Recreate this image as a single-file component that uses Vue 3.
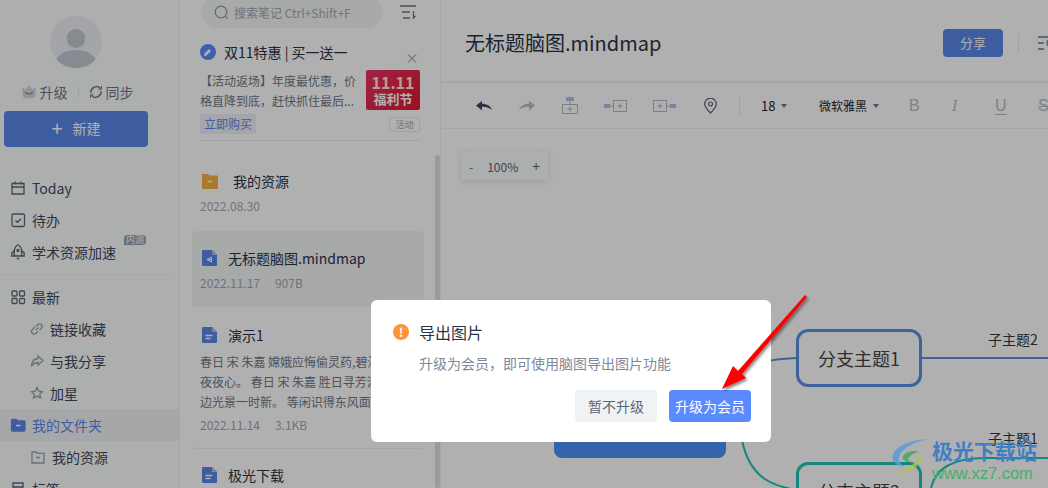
<template>
  <div class="app">
    <aside class="sidebar">
      <div class="avatar">
        <svg width="52" height="52" viewBox="0 0 52 52">
          <circle cx="26" cy="26" r="26" fill="#eef0f3" />
          <circle cx="26" cy="22.500" r="9.500" fill="#c3c8d2" />
          <path d="M6.500 43.500C10 37 17 34 26 34s16 3 19.500 9.500A26 26 0 0 1 26 52a26 26 0 0 1-19.500-8.500z" fill="#c3c8d2" />
        </svg>
      </div>
      <div class="sync-row">
        <svg width="16" height="14" viewBox="0 0 16 14">
          <path d="M1 2l3.500 2.500L8 0l3.500 4.500L15 2l-1 10q-6 3-12 0z" fill="#d4d7dc" />
          <path d="M4 7q4 4 8 0" stroke="#8d94a3" stroke-width="1.500" fill="none" />
        </svg>
        <span>升级</span>
        <i class="sep"></i>
        <svg width="14" height="14" viewBox="0 0 14 14" fill="none" stroke="#767d8c" stroke-width="1.500">
          <path d="M2 8A5.500 5.500 0 0 1 11.500 3.500M12 6a5.500 5.500 0 0 1-9.500 4.500" />
          <path d="M12.500 1v3.200H9.300M1.500 13V9.800h3.200" stroke-width="1" />
        </svg>
        <span>同步</span>
      </div>
      <button class="new-btn"><span class="plus">+</span>新建</button>

      <nav class="nav">
        <div class="nav-item">
          <svg class="ico" viewBox="0 0 16 16"><path d="M2 3.500h12v10.500H2zM2 7h12M5 1.500v3M11 1.500v3" /></svg>
          <span>Today</span>
        </div>
        <div class="nav-item">
          <svg class="ico" viewBox="0 0 16 16"><rect x="2" y="2" width="12.500" height="12.500" rx="1.500" /><path d="M5.500 8.500l2 1.800 3.500-3.500" /></svg>
          <span>待办</span>
        </div>
        <div class="nav-item">
          <svg class="ico" viewBox="0 0 16 16"><path d="M8 .8c2.700 1.500 3.700 4 3.700 6.700v4.500H4.300V7.500C4.300 4.800 5.300 2.300 8 .8zM4.300 6.500L1.800 9v3h2.500M11.700 6.500L14.200 9v3h-2.500M6.800 14.500h2.400" /><circle cx="8" cy="6.500" r="1" /></svg>
          <span>学术资源加速</span>
          <em class="tag">内测</em>
        </div>
        <div class="nav-line"></div>
        <div class="nav-item">
          <svg class="ico" viewBox="0 0 16 16"><rect x="2" y="2" width="5" height="5" rx="1" /><rect x="9.500" y="2" width="5" height="5" rx="1" /><rect x="2" y="9.500" width="5" height="5" rx="1" /><rect x="9.500" y="9.500" width="5" height="5" rx="1" /></svg>
          <span>最新</span>
        </div>
        <div class="nav-item sub">
          <svg class="ico small" viewBox="0 0 14 14"><path d="M6 8l2.500-2.500M5 5L2.500 7.500a2.500 2.500 0 0 0 3.500 4L8 9.500M6 4.500l2-2a2.500 2.500 0 0 1 3.500 3.500L9.500 8" /></svg>
          <span>链接收藏</span>
        </div>
        <div class="nav-item sub">
          <svg class="ico small" viewBox="0 0 14 14"><path d="M8 2l5 4.500L8 11V8.500C5 8.500 3 9.500 1.500 12.500 1.500 8 4 5 8 4.500z" /></svg>
          <span>与我分享</span>
        </div>
        <div class="nav-item sub">
          <svg class="ico small" viewBox="0 0 14 14"><path d="M7 1.500l1.700 3.600 3.800.5-2.800 2.600.8 3.800L7 10.100 3.500 12l.8-3.800L1.500 5.600l3.800-.5z" /></svg>
          <span>加星</span>
        </div>
        <div class="nav-item active">
          <svg class="ico" viewBox="0 0 16 16"><path class="solid" d="M1.500 3.500q0-1 1-1h3.800l1.500 1.500h6.200q1 0 1 1v8q0 1-1 1H2.500q-1 0-1-1z" /><path d="M6 8.500h4.500" stroke="#fff" stroke-width="1.500" /></svg>
          <span>我的文件夹</span>
        </div>
        <div class="nav-item sub res">
          <svg class="ico small" viewBox="0 0 14 14"><path d="M1 2h4l1.200 1.300H13V13H1zM5 7.500h4" /></svg>
          <span>我的资源</span>
        </div>
        <div class="nav-item">
          <svg class="ico" viewBox="0 0 16 16"><path d="M3 2h10v12H3zM3 6h10" /></svg>
          <span>标签</span>
        </div>
      </nav>
    </aside>

    <section class="list">
      <div class="search-row">
        <div class="search">
          <svg width="15" height="15" viewBox="0 0 15 15" fill="none" stroke="#8f97a6" stroke-width="1.200"><circle cx="7" cy="7" r="5.800" /><path d="M11.300 11.300l2.500 2.500" /></svg>
          <span>搜索笔记 Ctrl+Shift+F</span>
        </div>
        <svg class="sort" width="16" height="14" viewBox="0 0 16 14" fill="none" stroke="#6f7787" stroke-width="1.300">
          <path d="M0 1h16M2 7h8M3 13h7M13.500 6v7l2-2" />
        </svg>
      </div>

      <div class="promo">
        <div class="promo-title">
          <svg width="16" height="16" viewBox="0 0 16 16"><circle cx="8" cy="8" r="8" fill="#5b8aff" /><path d="M4.500 9.500l4.500-4.500 2 2-4.500 4.500-2.500.5z" fill="#fff" /></svg>
          <span>双11特惠 | 买一送一</span>
          <b class="close">×</b>
        </div>
        <div class="promo-body">
          <p>【活动返场】年度最优惠，价格直降到底，赶快抓住最后...</p>
          <div class="promo-pic">
            <strong>11.11</strong>
            <span>福利节</span>
          </div>
        </div>
        <div class="promo-foot">
          <span class="buy">立即购买</span>
          <span class="badge">活动</span>
        </div>
      </div>

      <div class="note folder-note">
        <div class="note-title">
          <svg class="doc" width="16" height="16" viewBox="0 0 16 16"><path d="M0 2q0-1 1-1h5l1.500 1.500H15q1 0 1 1V15q0 1-1 1H1q-1 0-1-1z" fill="#f5b041" /><path d="M5.500 8.500h4.500" stroke="#fff" stroke-width="1.500" /></svg>
          <span class="folder-name">我的资源</span>
        </div>
        <div class="note-meta">2022.08.30</div>
      </div>

      <div class="note selected">
        <div class="note-title">
          <svg class="doc" width="15" height="16" viewBox="0 0 15 16"><path d="M1 0h9l5 5v10q0 1-1 1H1q-1 0-1-1V1q0-1 1-1z" fill="#5b87e8" /><path d="M10 0l5 5h-5z" fill="#a9c1f5" /><path d="M5 9.500h5M9.500 7v5M5 9.500L9.500 7M5 9.500L9.500 12" stroke="#fff" stroke-width="1" fill="none" /></svg>
          <span>无标题脑图.mindmap</span>
        </div>
        <div class="note-meta"><span>2022.11.17</span><span>907B</span></div>
      </div>

      <div class="note text-note">
        <div class="note-title">
          <svg class="doc" width="15" height="16" viewBox="0 0 15 16"><path d="M1 0h9l5 5v10q0 1-1 1H1q-1 0-1-1V1q0-1 1-1z" fill="#5b87e8" /><path d="M10 0l5 5h-5z" fill="#a9c1f5" /><path d="M3.500 8.500h7M3.500 11.500h5" stroke="#fff" stroke-width="1.300" /></svg>
          <span>演示1</span>
        </div>
        <p class="excerpt">春日 宋 朱嘉 嫦娥应悔偷灵药,碧海<br>夜夜心。 春日 宋 朱嘉 胜日寻芳泗水<br>边光景一时新。 等闲识得东风面，万紫</p>
        <div class="note-meta"><span>2022.11.14</span><span>3.1KB</span></div>
      </div>

      <div class="note last-note">
        <div class="note-title">
          <svg class="doc" width="15" height="16" viewBox="0 0 15 16"><path d="M1 0h9l5 5v10q0 1-1 1H1q-1 0-1-1V1q0-1 1-1z" fill="#5b87e8" /><path d="M10 0l5 5h-5z" fill="#a9c1f5" /><path d="M3.500 8.500h7M3.500 11.500h5" stroke="#fff" stroke-width="1.300" /></svg>
          <span>极光下载</span>
        </div>
      </div>
      <div class="scrollbar"></div>
    </section>

    <main class="main">
      <header class="head">
        <h1>无标题脑图.mindmap</h1>
        <button class="share">分享</button>
        <i class="head-sep"></i>
        <svg class="outline" width="20" height="14" viewBox="0 0 20 14" fill="none" stroke="#6f7787" stroke-width="1.300"><path d="M0 1h20M0 7h6M0 13h6" /><circle cx="13" cy="7" r="4" /></svg>
      </header>

      <div class="toolbar">
        <svg class="tool" width="16" height="12" viewBox="0 0 16 12"><path d="M6 1v2.800C11 3.800 14.500 6 16 10c-3-2.500-6-3.300-10-3.200V10.500L0 5.500z" fill="#3f4860" /></svg>
        <svg class="tool" width="16" height="12" viewBox="0 0 16 12"><path d="M10 1v2.800C5 3.800 1.500 6 0 10c3-2.500 6-3.300 10-3.200V10.500L16 5.500z" fill="#b6bbc5" /></svg>
        <svg class="tool" width="16" height="18" viewBox="0 0 16 18" fill="none" stroke="#b2b7c1"><rect x="4" y="0" width="8" height="4" fill="#a9c3ee" stroke="none" /><path d="M8 4v3M.5 7.500h15v9H.5zM8 9.500v5M5.500 12h5" /></svg>
        <svg class="tool" width="23" height="12" viewBox="0 0 23 12" fill="none" stroke="#b2b7c1"><rect x="0" y="4" width="6" height="4" fill="#a9c3ee" stroke="none" /><path d="M6 6h3M9.500.5h13v11h-13zM16 3.500v5M13.500 6h5" /></svg>
        <svg class="tool" width="23" height="12" viewBox="0 0 23 12" fill="none" stroke="#b2b7c1"><rect x="17" y="4" width="6" height="4" fill="#a9c3ee" stroke="none" /><path d="M17 6h-3M.5.500h13v11H.5zM7 3.500v5M4.500 6h5" /></svg>
        <svg class="tool" width="13" height="16" viewBox="0 0 13 16" fill="none" stroke="#5c6577" stroke-width="1.200"><path d="M6.500 15C3 11.500.7 9 .7 6a5.800 5.800 0 0 1 11.600 0c0 3-2.300 5.500-5.800 9z" /><circle cx="6.500" cy="6" r="2" /></svg>
        <i class="tool-sep"></i>
        <span class="size">18<u class="caret"></u></span>
        <span class="family">微软雅黑<u class="caret"></u></span>
        <span class="fmt b">B</span>
        <span class="fmt i">I</span>
        <span class="fmt u">U</span>
        <span class="fmt s">S</span>
      </div>

      <div class="canvas">
        <div class="zoom-box"><span>-</span><span>100%</span><span class="zoom-plus">+</span></div>

        <svg class="lines" width="608" height="359" viewBox="440 129 608 359" fill="none">
          <path d="M640 420C700 380 740 360 796 358" stroke="#5a8fe0" stroke-width="2" />
          <path d="M921 358H1048" stroke="#5a8fe0" stroke-width="2" />
          <path d="M742 440C750 480 775 486 796 490" stroke="#1fc4b4" stroke-width="2" />
          <path d="M931 488C935 470 950 458 985 458H1048" stroke="#1fc4b4" stroke-width="2" />
        </svg>
        <div class="root-node"></div>
        <div class="topic blue">分支主题1</div>
        <div class="topic teal">分支主题2</div>
        <span class="leaf leaf-a">子主题2</span>
        <span class="leaf leaf-b">子主题1</span>
      </div>
    </main>

    <div class="mask"></div>

    <div class="dialog">
      <div class="dialog-title">
        <span class="warn">!</span>
        <span>导出图片</span>
      </div>
      <p>升级为会员，即可使用脑图导出图片功能</p>
      <div class="dialog-btns">
        <button class="later">暂不升级</button>
        <button class="upgrade">升级为会员</button>
      </div>
    </div>

    <svg class="arrow" width="1048" height="488" viewBox="0 0 1048 488">
      <defs>
        <filter id="arrowShadow" x="-30%" y="-30%" width="160%" height="160%">
          <feDropShadow dx="1.500" dy="2" stdDeviation="1.500" flood-color="#000" flood-opacity="0.500" />
        </filter>
      </defs>
      <path d="M722 389L733 366L738 371L805 295L807 297L742 374L746 378z" fill="#ff0000" filter="url(#arrowShadow)" />
    </svg>

    <div class="watermark">
      <svg class="wm-logo" width="40" height="40" viewBox="0 0 44 44" fill="none">
        <path d="M42 1C24 2 6 8 3 19c-2 8 6 12 14 13C10 28 7 22 13 15 19 8 32 3 42 1z" fill="#5b9bd5" opacity="0.850" />
        <path d="M32 15c-8-2-17 1-18 6-1 4 5 6 9 5-3-1-4-3-2-5 3-3 7-5 11-6z" fill="#43a86b" opacity="0.850" />
        <path d="M32 15c1 7-5 16-28 27 12-2 30-9 30-21 0-3-1-5-2-6z" fill="#a8c84a" opacity="0.800" />
      </svg>
      <div class="wm-text">
        <strong>极光下载站</strong>
        <span>www.xz7.com</span>
      </div>
    </div>
  </div>
</template>

<script setup>
</script>

<style>
html, body {
  margin: 0;
  overflow: hidden;
  background: #fff;
}
</style>

<style scoped>
.app {
  position: relative;
  display: flex;
  width: 1048px;
  height: 488px;
  overflow: hidden;
  background: #fff;
  color: #2b3245;
  font-family: "Noto Sans CJK SC", "Noto Sans", sans-serif;
  font-size: 14px;
}

button {
  font-family: inherit;
  border: none;
  cursor: pointer;
}

/* left column */
.sidebar {
  flex: none;
  width: 180px;
  height: 488px;
  background: #fbfdfc;
  box-shadow: inset -2px 0 0 #f5f6f6;
  box-sizing: border-box;
  overflow: hidden;
}

.avatar {
  display: flex;
  justify-content: center;
  width: 152px;
  padding-top: 16px;
  height: 52px;
}

.sync-row {
  display: flex;
  align-items: center;
  justify-content: center;
  width: 152px;
  height: 20px;
  margin-top: 14px;
  gap: 3px;
  color: #6f7787;
  font-size: 14px;
  line-height: 20px;
}

.sync-row svg:first-child {
  margin-left: 2px;
}

.sep {
  width: 1px;
  height: 12px;
  margin: 0 7px;
  background: #e4e6ea;
}

.new-btn {
  display: flex;
  align-items: center;
  justify-content: center;
  width: 144px;
  height: 36px;
  margin: 9px 0 0 4px;
  padding: 0 0 2px;
  border-radius: 4px;
  background: #5b87e8;
  color: #fff;
  font-size: 14px;
}

.plus {
  margin-right: 10px;
  font-size: 20px;
  line-height: 20px;
}

.nav {
  margin-top: 25px;
}

.nav-item {
  position: relative;
  display: flex;
  align-items: center;
  height: 32px;
  padding-left: 10px;
  color: #3f4860;
  font-size: 14px;
  white-space: nowrap;
}

.ico {
  flex: none;
  width: 16px;
  height: 16px;
  margin-right: 6px;
  fill: none;
  stroke: #5c6577;
  stroke-width: 1.300;
}

.ico.small {
  width: 14px;
  height: 14px;
  stroke: #9aa1ae;
}

.sub {
  padding-left: 30px;
}

.res {
  padding-left: 31px;
}

.res .ico {
  margin-right: 7px;
}

.active {
  background: #f0f2f3;
  color: #5b87e8;
}

.solid {
  fill: #5b87e8;
  stroke: #5b87e8;
}

.tag {
  position: absolute;
  left: 124px;
  top: -1px;
  width: 22px;
  height: 10px;
  border-radius: 4px 4px 4px 0;
  background: #9aa1ae;
  color: #fff;
  font-size: 9px;
  font-style: normal;
  line-height: 10px;
  text-align: center;
}

.nav-line {
  height: 1px;
  margin: 6px 6px 6px 0;
  background: #f1f2f3;
}

/* note list */
.list {
  position: relative;
  flex: none;
  width: 260px;
  height: 488px;
  overflow: hidden;
}

.search-row {
  display: flex;
  align-items: center;
  height: 32px;
  margin: -4px 0 0 21px;
}

.search {
  display: flex;
  align-items: center;
  gap: 5px;
  width: 182px;
  height: 32px;
  padding-left: 13px;
  box-sizing: border-box;
  border-radius: 16px;
  background: #f3f5f5;
  color: #a1a8b4;
  font-size: 12px;
}

.sort {
  margin-left: 17px;
}

.promo {
  margin: 14px 20px 0;
  padding-bottom: 6px;
  border-bottom: 1px solid #eceef0;
}

.promo-title {
  position: relative;
  display: flex;
  align-items: center;
  gap: 8px;
  height: 20px;
  color: #2b3245;
  font-size: 14px;
}

.close {
  position: absolute;
  right: 1px;
  top: 5px;
  color: #a1a8b4;
  font-size: 14px;
  font-weight: 400;
}

.promo-body {
  display: flex;
  gap: 8px;
  margin-top: 9px;
}

.promo-body p {
  flex: 1;
  margin: 0;
  color: #6f7787;
  font-size: 12px;
  line-height: 20px;
}

.promo-pic {
  flex: none;
  display: flex;
  flex-direction: column;
  align-items: center;
  width: 54px;
  height: 40px;
  margin-top: -1px;
  border-radius: 2px;
  background: linear-gradient(135deg, #e8326c, #e0182a);
  color: #fff;
  line-height: 1;
}

.promo-pic strong {
  margin-top: 4px;
  color: #ffe9c9;
  font-size: 16px;
}

.promo-pic span {
  margin-top: 2px;
  font-size: 13px;
  font-weight: 700;
}

.promo-foot {
  display: flex;
  align-items: center;
  justify-content: space-between;
  margin-top: 3px;
}

.buy {
  padding: 0 4px;
  height: 20px;
  background: #eef1f6;
  color: #5b87e8;
  font-size: 12px;
  line-height: 20px;
}

.badge {
  width: 29px;
  height: 13px;
  border: 1px solid #e6e8ec;
  border-radius: 2px;
  color: #a1a8b4;
  font-size: 9px;
  line-height: 13px;
  text-align: center;
}

.note {
  margin: 0 16px 0 12px;
  padding: 0 8px;
  border-radius: 4px;
}

.note-title {
  display: flex;
  align-items: center;
  height: 22px;
  color: #2b3245;
  font-size: 14px;
  white-space: nowrap;
}

.note-title .doc {
  margin: 0 11px 0 2px;
}

.folder-name {
  margin-left: 4px;
}

.note-meta {
  display: flex;
  gap: 15px;
  margin-top: 5px;
  color: #a1a8b4;
  font-size: 12px;
  line-height: 18px;
}

.folder-note {
  padding-top: 29px;
  height: 61px;
}

.selected {
  height: 76px;
  padding-top: 16px;
  box-sizing: border-box;
  background: #f3f5f5;
}

.text-note {
  padding-top: 17px;
  padding-bottom: 14px;
  margin: 0 16px 0 12px;
  border-bottom: 1px solid #eceef0;
}

.excerpt {
  height: 60px;
  margin: 6px 0 4px;
  overflow: hidden;
  color: #6f7787;
  font-size: 12px;
  line-height: 20px;
  white-space: nowrap;
}

.text-note .note-meta {
  margin-top: 0;
}

.last-note {
  padding-top: 15px;
}

.scrollbar {
  position: absolute;
  right: 0;
  top: 155px;
  width: 5px;
  height: 333px;
  border-radius: 3px;
  background: #dfe1e6;
}

/* editor column */
.main {
  flex: none;
  width: 608px;
  height: 488px;
  border-left: 1px solid #f1f2f3;
  box-sizing: border-box;
  overflow: hidden;
}

.head {
  display: flex;
  align-items: center;
  height: 83px;
  padding: 4px 0 0 24px;
  box-sizing: border-box;
  border-bottom: 2px solid #f0f1f3;
}

.head h1 {
  flex: 1;
  margin: 0;
  color: #2b3245;
  font-size: 20px;
  font-weight: 400;
}

.share {
  width: 60px;
  height: 28px;
  border-radius: 4px;
  background: #5b87e8;
  color: #fff;
  font-size: 13px;
}

.head-sep {
  width: 1px;
  height: 18px;
  margin: 0 19px 0 15px;
  background: #e6e8ec;
}

.outline {
  margin-right: -10px;
}

.toolbar {
  display: flex;
  align-items: center;
  width: 640px;
  height: 46px;
  padding-left: 35px;
  box-sizing: border-box;
  border-bottom: 1px solid #f0f1f3;
}

.tool {
  flex: none;
}

.tool:nth-child(2) { margin-left: 27px; }
.tool:nth-child(3) { margin-left: 27px; }
.tool:nth-child(4) { margin-left: 26px; }
.tool:nth-child(5) { margin-left: 26px; }
.tool:nth-child(6) { margin-left: 28px; }

.tool-sep {
  flex: none;
  width: 1px;
  height: 18px;
  margin: 0 21px 0 22px;
  background: #e6e8ec;
}

.size,
.family {
  display: flex;
  align-items: center;
  flex: none;
  color: #1c2333;
  font-size: 12px;
}

.size {
  width: 58px;
  font-size: 13px;
}

.family {
  width: 90px;
}

.caret {
  width: 0;
  height: 0;
  margin-left: 6px;
  border: 3px solid transparent;
  border-top: 4px solid #6f7787;
  border-bottom: 0;
}

.fmt {
  width: 43px;
  flex: none;
  color: #b6bbc5;
  font-family: "Liberation Sans", sans-serif;
  font-size: 16px;
  line-height: 20px;
}

.fmt.i {
  font-style: italic;
  font-family: "Liberation Serif", serif;
}

.fmt.u {
  text-decoration: underline;
  text-underline-offset: 3px;
}

.fmt.s {
  text-decoration: line-through;
}

.canvas {
  position: relative;
  height: 359px;
}

.zoom-box {
  position: absolute;
  left: 20px;
  top: 23px;
  display: flex;
  align-items: center;
  justify-content: space-between;
  width: 87px;
  height: 28px;
  padding: 0 8px;
  box-sizing: border-box;
  background: #fbfcfd;
  box-shadow: 0 1px 6px rgba(60, 80, 120, 0.18);
  color: #5c6577;
  font-size: 12px;
}

.zoom-plus {
  font-size: 14px;
}

.lines {
  position: absolute;
  left: -1px;
  top: 0;
}

.root-node {
  position: absolute;
  left: 113px;
  top: 250px;
  width: 172px;
  height: 79px;
  border-radius: 8px;
  background: #4d90f5;
}

.topic {
  position: absolute;
  left: 355px;
  display: flex;
  align-items: center;
  justify-content: center;
  width: 126px;
  height: 58px;
  box-sizing: border-box;
  border-radius: 12px;
  background: #fff;
  color: #444;
  font-size: 18px;
}

.blue {
  top: 200px;
  border: 3px solid #5a8fe0;
}

.teal {
  top: 333px;
  border: 3px solid #1fc4b4;
}

.leaf {
  position: absolute;
  left: 547px;
  color: #333;
  font-size: 14px;
  line-height: 20px;
}

.leaf-a { top: 200px; }
.leaf-b { top: 299px; }

/* overlay */
.mask {
  position: absolute;
  inset: 0;
  background: rgba(0, 0, 0, 0.31);
}

.dialog {
  position: absolute;
  left: 371px;
  top: 300px;
  width: 400px;
  height: 142px;
  padding: 20px 20px 0 22px;
  box-sizing: border-box;
  border-radius: 6px;
  background: #fff;
}

.dialog-title {
  display: flex;
  align-items: center;
  gap: 10px;
  height: 24px;
  color: #2b3245;
  font-size: 16px;
}

.warn {
  width: 16px;
  height: 16px;
  border-radius: 50%;
  background: #ff9437;
  color: #fff;
  font-size: 12px;
  font-weight: 700;
  line-height: 16px;
  text-align: center;
}

.dialog p {
  margin: 8px 0 0 26px;
  color: #7f8798;
  font-size: 14px;
  line-height: 22px;
}

.dialog-btns {
  display: flex;
  justify-content: flex-end;
  gap: 12px;
  margin-top: 16px;
}

.dialog-btns button {
  width: 82px;
  height: 32px;
  border-radius: 4px;
  font-size: 14px;
}

.later {
  background: #f0f3f6;
  color: #5c6577;
}

.upgrade {
  background: #5b8aff;
  color: #fff;
}

.arrow {
  position: absolute;
  left: 0;
  top: 0;
  pointer-events: none;
}

.watermark {
  position: absolute;
  left: 890px;
  top: 437px;
  display: flex;
  gap: 2px;
}

.wm-logo {
  margin-top: 1px;
}

.wm-text {
  display: flex;
  flex-direction: column;
}

.wm-text strong {
  color: #3f7fc4;
  font-size: 21px;
  line-height: 26px;
  font-weight: 700;
  white-space: nowrap;
}

.wm-text span {
  color: #43b06b;
  font-family: "Liberation Sans", sans-serif;
  font-size: 16.500px;
  line-height: 20px;
}
</style>
